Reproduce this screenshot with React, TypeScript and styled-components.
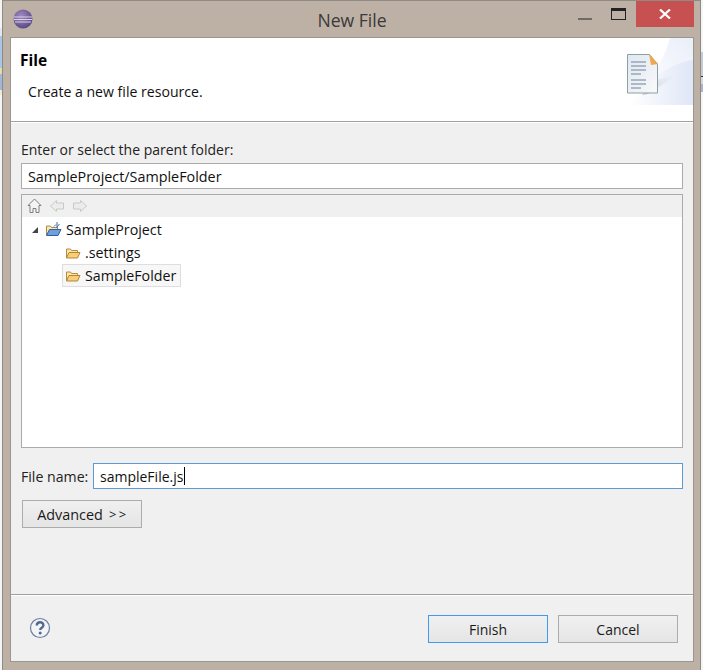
import * as React from 'react'
import styled, { createGlobalStyle } from 'styled-components'

const GlobalStyle = createGlobalStyle`
  html, body {
    margin: 0;
    padding: 0;
    background: #f4f4f4;
    overflow: hidden;
  }
  * {
    box-sizing: border-box;
  }
`

const Desktop = styled.div`
  width: 703px;
  height: 670px;
  padding-left: 2px;
  font-family: 'Open Sans', 'Noto Sans', 'Liberation Sans', sans-serif;
  font-size: 14px;
  color: #1a1a1a;
  background:
    linear-gradient(#e4e6e8 0 8px, #a9c6e6 8px 40px, #e8d9a8 40px 46px, #9fb9dd 46px 62px, #efe9d6 62px) 0 28px / 2px 67px no-repeat,
    linear-gradient(#c5cbd2 0 24px, #333 24px 25px, #d5d8dc 25px 32px, #aab4c8 32px) 701px 52px / 2px 40px no-repeat;
`

const Window = styled.div`
  width: 699px;
  height: 670px;
  display: flex;
  flex-direction: column;
  background: #bdb0a4;
  border: 1px solid #8f8a84;
  border-bottom: 0;
  padding: 0 6px 8px 7px;
`

const TitleBar = styled.div`
  height: 36px;
  flex: none;
  position: relative;
  display: flex;
  align-items: flex-start;
  justify-content: space-between;
`

const AppIcon = styled.svg`
  width: 20px;
  height: 20px;
  margin: 8px 0 0 3px;
`

const Title = styled.div`
  position: absolute;
  left: 0;
  right: 0;
  top: 8px;
  text-align: center;
  font-size: 17.6px;
  line-height: 22px;
  color: #3a3a3a;
`

const WindowButtons = styled.div`
  display: flex;
  align-items: flex-start;
`

const MinIcon = styled.div`
  width: 14px;
  height: 2px;
  margin: 17px 19px 0 0;
  background: #6f6a64;
`

const MaxIcon = styled.div`
  width: 15px;
  height: 12px;
  margin: 7px 10px 0 0;
  border: 1px solid #222;
  border-top-width: 3px;
`

const CloseButton = styled.div`
  width: 58px;
  height: 26px;
  display: flex;
  align-items: center;
  justify-content: center;
  background: #c75050;
`

const Content = styled.div`
  flex: 1;
  display: flex;
  flex-direction: column;
  background: #f0f0f0;
  border: 1px solid #9c958e;
`

const Banner = styled.div`
  height: 84px;
  flex: none;
  position: relative;
  background: #fff;
  border-bottom: 1px solid #a0a0a0;
  padding: 11px 0 0 9px;
`

const BannerTitle = styled.div`
  font-size: 15.5px;
  font-weight: 700;
  line-height: 22px;
  color: #000;
`

const BannerText = styled.div`
  margin: 11px 0 0 8px;
  line-height: 20px;
  font-size: 14.1px;
  color: #111;
`

const BannerArt = styled.svg`
  position: absolute;
  right: 0;
  top: 0;
  width: 75px;
  height: 67px;
`

const Body = styled.div`
  flex: 1;
  display: flex;
  flex-direction: column;
  padding: 17px 10px 0 10px;
  border-top: 1px solid #fff;
`

const Label = styled.div`
  line-height: 20px;
  color: #222;
`

const NameLabel = styled(Label)`
  width: 67px;
  flex: none;
  padding-top: 1px;
  font-size: 14.15px;
  white-space: nowrap;
`

const TextBox = styled.div<{ $focused?: boolean }>`
  flex: 1;
  height: 26px;
  display: flex;
  align-items: center;
  padding: 0 6px;
  background: #fff;
  border: 1px solid ${(p) => (p.$focused ? '#5b9bd5' : '#ababab')};
  color: #111;
`

const Caret = styled.span`
  width: 1px;
  height: 18px;
  margin-left: 1px;
  background: #000;
`

const FolderBox = styled(TextBox)`
  flex: none;
  margin-top: 3px;
  font-size: 14.35px;
`

const TreePanel = styled.div`
  height: 254px;
  flex: none;
  margin-top: 5px;
  background: #fff;
  border: 1px solid #ababab;
  font-size: 14.25px;
`

const TreeToolbar = styled.div`
  height: 23px;
  display: flex;
  align-items: center;
  gap: 7px;
  padding: 0 0 1px 5px;
  background: linear-gradient(#f0f0f0 22px, #fff 22px);
`

const TreeRow = styled.div<{ $indent: number }>`
  height: 23px;
  display: flex;
  align-items: center;
  padding-left: ${(p) => p.$indent}px;
  color: #111;
`

const Twisty = styled.div`
  width: 0;
  height: 0;
  margin-right: 4px;
  border-left: 6px solid transparent;
  border-bottom: 6px solid #444;
`

const RowInner = styled.div<{ $selected?: boolean }>`
  height: 23px;
  display: flex;
  align-items: center;
  gap: 4px;
  padding: 0 4px 0 2px;
  background: ${(p) => (p.$selected ? '#f7f7f7' : 'transparent')};
  border: 1px solid ${(p) => (p.$selected ? '#dedede' : 'transparent')};
`

const NameRow = styled.div`
  display: flex;
  align-items: center;
  gap: 5px;
  margin-top: 15px;
`

const PushButton = styled.div<{ $default?: boolean }>`
  width: 120px;
  height: 28px;
  display: flex;
  align-items: center;
  justify-content: center;
  background: linear-gradient(#f0f0f0, #e5e5e5);
  border: 1px solid ${(p) => (p.$default ? '#3e9bf0' : '#acacac')};
  color: #1a1a1a;
`

const Chevrons = styled.span`
  margin-left: 6px;
  letter-spacing: 2.5px;
  margin-right: -2px;
  font-size: 13px;
`

const AdvancedLabel = styled.span`
  font-size: 14.4px;
`

const AdvancedRow = styled.div`
  margin: 11px 0 0 1px;
`

const Spacer = styled.div`
  flex: 1;
`

const Footer = styled.div`
  height: 67px;
  flex: none;
  display: flex;
  align-items: flex-start;
  justify-content: space-between;
  padding: 20px 15px 0 18px;
  border-top: 1px solid #a0a0a0;
  box-shadow: inset 0 1px 0 #fff;
`

const HelpIcon = styled.svg`
  width: 22px;
  height: 22px;
  margin-top: 2px;
`

const FooterButtons = styled.div`
  display: flex;
  gap: 10px;
`

const FolderIcon: React.FC = () => (
  <svg width="16" height="16" viewBox="0 0 16 16">
    <path d="M1.5 13V4h4l1 1.5h6V8" fill="#fbe6ae" stroke="#b98a3a" />
    <path d="M1.5 13l2.5-5.5h11l-2.5 5.5z" fill="#f7cf76" stroke="#b5843a" />
  </svg>
)

const ProjectIcon: React.FC = () => (
  <svg width="17" height="17" viewBox="0 0 17 17">
    <path d="M1.5 14V5h4l1 1.5h6V9" fill="#fbe6ae" stroke="#a88a4a" />
    <path d="M1.5 14.5l3-6h11.5l-3 6z" fill="#6f9fdc" stroke="#2f5f9f" />
    <path d="M12 1v6M14.5 3l-2.5 3M11 3.5l-2 2" stroke="#3d6fb0" fill="none" />
  </svg>
)

const NavArrow: React.FC<{ flip?: boolean }> = ({ flip }) => (
  <svg width="16" height="14" viewBox="0 0 16 14">
    <path
      d={flip ? 'M7.5 1.5l6 5.5-6 5.5V10H.5V4h7z' : 'M6.5 1.5L.5 7l6 5.5V10h7V4h-7z'}
      fill="#ececec"
      stroke="#c6cac6"
    />
  </svg>
)

const App: React.FC = () => (
  <Desktop>
    <GlobalStyle />
    <Window>
      <TitleBar>
        <AppIcon viewBox="0 0 20 20">
          <defs>
            <radialGradient id="eclipse" cx="0.4" cy="0.35" r="0.75">
              <stop offset="0" stopColor="#a08cc0" />
              <stop offset="1" stopColor="#51407e" />
            </radialGradient>
          </defs>
          <circle cx="10" cy="10" r="9.5" fill="url(#eclipse)" />
          <path d="M1 8h18M.8 10.5h18.4M2 13h16" stroke="#d9d0e6" strokeWidth="1" />
        </AppIcon>
        <Title>New File</Title>
        <WindowButtons>
          <MinIcon />
          <MaxIcon />
          <CloseButton>
            <svg width="12" height="10" viewBox="0 0 12 10">
              <path d="M1 0.5l10 9M11 0.5l-10 9" stroke="#fff" strokeWidth="2.2" />
            </svg>
          </CloseButton>
        </WindowButtons>
      </TitleBar>
      <Content>
        <Banner>
          <BannerTitle>File</BannerTitle>
          <BannerText>Create a new file resource.</BannerText>
          <BannerArt viewBox="0 0 75 67">
            <defs>
              <linearGradient id="washLight" x1="0" y1="1" x2="1" y2="0">
                <stop offset="0.2" stopColor="#ffffff" />
                <stop offset="1" stopColor="#e9eef9" />
              </linearGradient>
              <linearGradient id="washDeep" x1="0" y1="0" x2="1" y2="0">
                <stop offset="0" stopColor="#ffffff" />
                <stop offset="1" stopColor="#dfe6f6" />
              </linearGradient>
              <linearGradient id="sheet" x1="0" y1="0" x2="1" y2="1">
                <stop offset="0" stopColor="#dfe8f2" />
                <stop offset="1" stopColor="#f9f9f9" />
              </linearGradient>
              <linearGradient id="cast" x1="0" y1="1" x2="1" y2="0">
                <stop offset="0" stopColor="#c8c2c8" />
                <stop offset="1" stopColor="#dfe6f6" stopOpacity="0" />
              </linearGradient>
              <filter id="soft">
                <feGaussianBlur stdDeviation="0.4" />
              </filter>
            </defs>
            <path d="M5 67C30 50 45 25 52 0h23v67z" fill="url(#washLight)" />
            <path d="M12 67C32 40 50 26 75 22v45z" fill="url(#washDeep)" />
            <path d="M38 42l22-6-30 20-6 1z" fill="url(#cast)" />
            <path d="M9.5 16.5h22l8 9.5v29h-30z" fill="url(#sheet)" stroke="#8aa2a2" />
            <path d="M31 16l9 10-7 1z" fill="#efa850" />
            <path
              d="M13 24h15M13 28h15M13 32h15M13 36h10M13 42h15M13 46h15M13 50h10"
              stroke="#9aa6b6"
              strokeWidth="1.3"
              filter="url(#soft)"
            />
          </BannerArt>
        </Banner>
        <Body>
          <Label>Enter or select the parent folder:</Label>
          <FolderBox>SampleProject/SampleFolder</FolderBox>
          <TreePanel>
            <TreeToolbar>
              <svg width="16" height="16" viewBox="0 0 16 16">
                <path
                  d="M7.5 1L1 7.5h2v7h3v-4h3v4h3v-7h2z"
                  fill="#f4f4f4"
                  stroke="#7f7f7f"
                />
              </svg>
              <NavArrow />
              <NavArrow flip />
            </TreeToolbar>
            <TreeRow $indent={10}>
              <Twisty />
              <RowInner>
                <ProjectIcon />
                SampleProject
              </RowInner>
            </TreeRow>
            <TreeRow $indent={40}>
              <RowInner>
                <FolderIcon />
                .settings
              </RowInner>
            </TreeRow>
            <TreeRow $indent={40}>
              <RowInner $selected>
                <FolderIcon />
                SampleFolder
              </RowInner>
            </TreeRow>
          </TreePanel>
          <NameRow>
            <NameLabel>File name:</NameLabel>
            <TextBox $focused>
              sampleFile.js
              <Caret />
            </TextBox>
          </NameRow>
          <AdvancedRow>
            <PushButton>
              <AdvancedLabel>Advanced</AdvancedLabel>
              <Chevrons>&gt;&gt;</Chevrons>
            </PushButton>
          </AdvancedRow>
          <Spacer />
        </Body>
        <Footer>
          <HelpIcon viewBox="0 0 22 22">
            <circle cx="11" cy="11" r="9.5" fill="#f2f4f8" stroke="#6e7f9e" strokeWidth="1.2" />
            <path
              d="M7.8 8.4c0-4.2 6.6-4.2 6.6-.2 0 2.6-3.2 2.4-3.2 4.8"
              fill="none"
              stroke="#55688c"
              strokeWidth="2.4"
            />
            <circle cx="11.2" cy="16" r="1.5" fill="#55688c" />
          </HelpIcon>
          <FooterButtons>
            <PushButton $default>Finish</PushButton>
            <PushButton>Cancel</PushButton>
          </FooterButtons>
        </Footer>
      </Content>
    </Window>
  </Desktop>
)

export default App
